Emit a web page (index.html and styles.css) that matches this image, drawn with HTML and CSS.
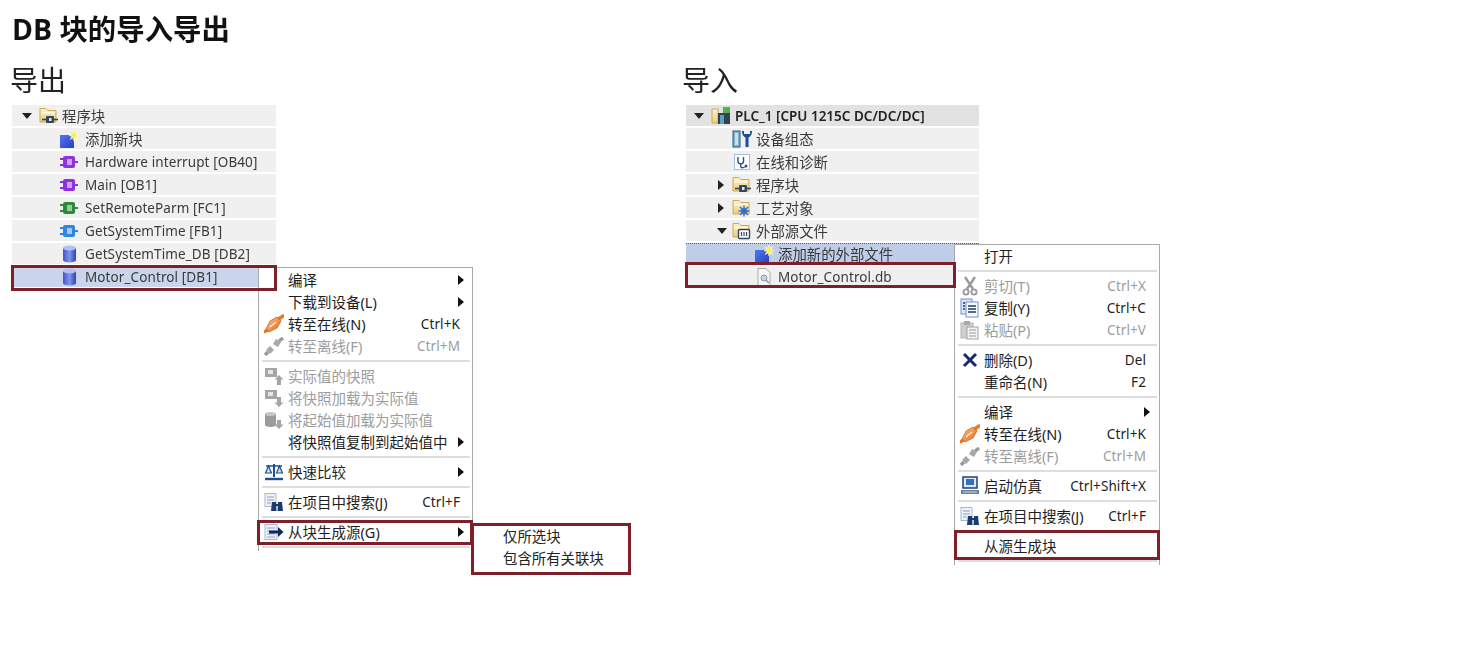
FILE: index.html
```html
<!DOCTYPE html>
<html lang="zh-CN">
<head>
<meta charset="utf-8">
<title>DB 块的导入导出</title>
<link rel="stylesheet" href="styles.css">
</head>
<body>
<svg class="sprite" aria-hidden="true">
  <defs>
    <linearGradient id="g-folder" x1="0" y1="0" x2="0" y2="1"><stop offset="0" stop-color="#fdf1cd"/><stop offset="1" stop-color="#eccb7e"/></linearGradient>
    <linearGradient id="g-db" x1="0" y1="0" x2="1" y2="0"><stop offset="0" stop-color="#3f57c9"/><stop offset=".5" stop-color="#7f93ea"/><stop offset="1" stop-color="#3044ad"/></linearGradient>
    <linearGradient id="g-plug" x1="0" y1="0" x2="1" y2="1"><stop offset="0" stop-color="#fbc38a"/><stop offset="1" stop-color="#e4691a"/></linearGradient>
    <linearGradient id="g-new" x1="0" y1="0" x2="1" y2="1"><stop offset="0" stop-color="#4f78ee"/><stop offset="1" stop-color="#2a3fc8"/></linearGradient>
    <symbol id="i-folder" viewBox="0 0 20 18"><path d="M1 1.500h6l2 2h8v11.500H1z" fill="url(#g-folder)" stroke="#cfa954"/><path d="M2.500 5h13v1.500h-13z" fill="#fffbe9"/></symbol>
    <symbol id="i-star" viewBox="0 0 20 18"><path d="M1 5h14v13H1z" fill="url(#g-new)"/><path d="M15 0l1 3 2.800-1.500L17.300 4.500 20 5.500l-2.700 1 1.500 3L16 8l-1 3-1-3-2.800 1.500 1.500-3-2.700-1 2.700-1-1.500-3L14 3z" fill="#f6ef60" stroke="#fffde0" stroke-width=".5"/></symbol>
    <symbol id="i-block" viewBox="0 0 20 18"><path d="M1 6h4M1 12h4M15 9h4" stroke="currentColor" stroke-width="2"/><rect x="4" y="3" width="12" height="12" rx="2" fill="currentColor"/><rect x="8" y="6" width="5" height="6" fill="#fff" fill-opacity=".55"/></symbol>
    <symbol id="i-db" viewBox="0 0 20 18"><path d="M4 3v12c0 3.200 13 3.200 13 0V3z" fill="url(#g-db)"/><ellipse cx="10.500" cy="3" rx="6.500" ry="2.400" fill="#b4c0f4"/></symbol>
    <symbol id="i-plc" viewBox="0 0 20 18"><path d="M1 2h6v14H1z" fill="url(#g-folder)" stroke="#cfa954"/><rect x="7" y="6" width="12" height="11" fill="#2f4350"/><rect x="9" y="8" width="4" height="9" fill="#5aa0bf"/><rect x="12" y="0" width="7" height="6" fill="#4fb34a"/></symbol>
    <symbol id="i-devcfg" viewBox="0 0 20 18"><rect x="1" y="1" width="7" height="16" fill="#7fb4cc" stroke="#2a5b86"/><rect x="3" y="3" width="3" height="12" fill="#c7e0ec"/><path d="M10 1c0 4 2 6 3.500 6.500V17h3V7.500C18 7 20 5 20 1l-2 0v3h-6V1z" fill="#1d4f8f"/></symbol>
    <symbol id="i-diag" viewBox="0 0 20 18"><rect x="2.500" y="1.500" width="15" height="15" fill="#fff" stroke="#a9bed4"/><path d="M6 4v4.500c0 3 5.500 3 5.500 0V4M8.700 11v2.500c0 1.500 2.500 1.500 4 .5" fill="none" stroke="#27508c" stroke-width="1.400"/><circle cx="14" cy="13" r="1.500" fill="#27508c"/></symbol>
    <symbol id="i-fold-block" viewBox="0 0 20 18"><use href="#i-folder" width="20" height="18"/><path d="M3 12.500h16" stroke="#33475b" stroke-width="1.600"/><rect x="7" y="9" width="8" height="7" rx="1" fill="#33475b"/><rect x="10" y="11" width="2.500" height="3" fill="#dfe6ee"/></symbol>
    <symbol id="i-fold-tech" viewBox="0 0 20 18"><use href="#i-folder" width="20" height="18"/><circle cx="12" cy="12" r="3" fill="#2f6fd0"/><path d="M12 6.500v11M6.500 12h11M8 8l8 8M16 8l-8 8" stroke="#2f6fd0" stroke-width="1.400"/></symbol>
    <symbol id="i-fold-src" viewBox="0 0 20 18"><use href="#i-folder" width="20" height="18"/><rect x="6.500" y="7.500" width="11" height="9" rx="1" fill="#fff" stroke="#33475b" stroke-width="1.400"/><path d="M9.500 10v4M12 10v4M14.500 10v4" stroke="#33475b" stroke-width="1.200"/></symbol>
    <symbol id="i-file" viewBox="0 0 20 18"><path d="M4 .5h8l4 4V17.500H4z" fill="#f7f7f7" stroke="#a9a9a9"/><circle cx="10" cy="10" r="3" fill="#c9d2dc" stroke="#8d98a6"/><path d="M12 12l3 3" stroke="#8d98a6" stroke-width="1.500"/></symbol>
    <symbol id="i-plug" viewBox="0 0 20 20"><path d="M1 17.500l5-3M14 5.500l5-3.500" stroke="#e87a25" stroke-width="3.400" stroke-linecap="round"/><path d="M2 15l4-8 7-4 4 4-4 7-8 4z" fill="url(#g-plug)" stroke="#c9590f" stroke-width=".7"/><path d="M6 13l6-5" stroke="#fff0df" stroke-width="1.400"/></symbol>
    <symbol id="i-unplug" viewBox="0 0 20 20"><path d="M1 19l3-3M15 5l4-3" stroke="#9a9a9a" stroke-width="3.400"/><path d="M2 14l4-4 4 4-4 4zM9 8l3-5 5 3-3 5z" fill="#a9a9a9"/></symbol>
    <symbol id="i-snap-up" viewBox="0 0 20 20"><rect x="1" y="2" width="12" height="9" fill="#a5a5a5"/><rect x="4" y="4" width="5" height="4" fill="#e4e4e4"/><path d="M15 9l4.500 4.500H17V19h-4v-5.500h-2.500z" fill="#a5a5a5"/></symbol>
    <symbol id="i-snap-down" viewBox="0 0 20 20"><rect x="1" y="2" width="12" height="9" fill="#a5a5a5"/><rect x="4" y="4" width="5" height="4" fill="#e4e4e4"/><path d="M15 19l4.500-4.500H17V9h-4v5.500h-2.500z" fill="#a5a5a5"/></symbol>
    <symbol id="i-db-down" viewBox="0 0 20 20"><path d="M1 4v11c0 2.500 11 2.500 11 0V4z" fill="#9b9b9b"/><ellipse cx="6.500" cy="4" rx="5.500" ry="2" fill="#c6c6c6"/><path d="M15 19l4.500-4.500H17V10h-4v4.500h-2.500z" fill="#a5a5a5"/></symbol>
    <symbol id="i-scale" viewBox="0 0 20 20"><path d="M10 2v13" stroke="#1d4f8f" stroke-width="2"/><path d="M2 4h16" stroke="#1d4f8f" stroke-width="1.500"/><path d="M1 17h18" stroke="#1d4f8f" stroke-width="2.400"/><path d="M4.500 4L1.500 11h6zM15.500 4l-3 7h6z" fill="#cfe0f2" stroke="#1d4f8f" stroke-width="1.200"/></symbol>
    <symbol id="i-search" viewBox="0 0 20 20"><rect x="1" y="1.500" width="11" height="13" fill="#eef2f8" stroke="#a9b9cc"/><path d="M3 5h7M3 8h7M3 11h4" stroke="#8ea2bb"/><path d="M8 10h4l.5 9H7zM14 10h4l1 9h-5.500z" fill="#1c3a6c"/><path d="M11 13h4" stroke="#1c3a6c" stroke-width="2"/></symbol>
    <symbol id="i-gensrc" viewBox="0 0 20 20"><rect x="1" y="2.500" width="12" height="15" fill="#eef2f8" stroke="#a9b9cc"/><path d="M3 6h8M3 9h8M3 12h8M3 15h8" stroke="#8ea2bb"/><path d="M5 8.500h9V5l5.500 5-5.500 5v-3.500H5z" fill="#14265c"/></symbol>
    <symbol id="i-cut" viewBox="0 0 20 20"><path d="M5 1l8 12M15 1L7 13" stroke="#999" stroke-width="2.400"/><circle cx="6" cy="16" r="2.600" fill="none" stroke="#999" stroke-width="1.800"/><circle cx="14" cy="16" r="2.600" fill="none" stroke="#999" stroke-width="1.800"/></symbol>
    <symbol id="i-copy" viewBox="0 0 20 20"><rect x="1" y="1" width="11" height="15" fill="#dfe7f5" stroke="#6f90d0"/><rect x="6" y="4" width="12" height="15" fill="#f7f9fd" stroke="#6f90d0"/><path d="M8 8h8M8 11h8M8 14h8" stroke="#1e3a6e" stroke-width="1.300"/><path d="M3 5h2M3 8h2M3 11h2" stroke="#1e3a6e" stroke-width="1.300"/></symbol>
    <symbol id="i-paste" viewBox="0 0 20 20"><rect x="1" y="3" width="12" height="15" fill="#cfcfcf" stroke="#b5b5b5"/><rect x="4" y="1" width="6" height="4" fill="#a9a9a9"/><rect x="7" y="7" width="11" height="12" fill="#f4f4f4" stroke="#a3a3a3"/><path d="M9 10h7M9 13h7M9 16h7" stroke="#9a9a9a"/></symbol>
    <symbol id="i-del" viewBox="0 0 20 20"><path d="M4 4l12 12M16 4L4 16" stroke="#1b2a6b" stroke-width="3"/></symbol>
    <symbol id="i-sim" viewBox="0 0 20 20"><rect x="3" y="1" width="14" height="11" fill="#dfe7f5" stroke="#1d3f7a" stroke-width="1.500"/><rect x="6" y="3" width="8" height="6" fill="#2f6fc0"/><rect x="1" y="14" width="18" height="4" fill="#6a7f99"/><path d="M3 16h14" stroke="#d5dde8"/></symbol>
  </defs>
</svg>

<main class="page">
  <h1 class="title">DB 块的导入导出</h1>
  <div class="columns">

    <section class="col col-export">
      <h2 class="heading">导出</h2>
      <div class="tree tree-export">
        <div class="row export-root"><span class="twist open"></span><svg class="ico"><use href="#i-fold-block"/></svg><span class="label cjk">程序块</span></div>
        <div class="row export-leaf"><svg class="ico"><use href="#i-star"/></svg><span class="label cjk">添加新块</span></div>
        <div class="row export-leaf"><svg class="ico ob"><use href="#i-block"/></svg><span class="label">Hardware interrupt [OB40]</span></div>
        <div class="row export-leaf"><svg class="ico ob"><use href="#i-block"/></svg><span class="label">Main [OB1]</span></div>
        <div class="row export-leaf"><svg class="ico fc"><use href="#i-block"/></svg><span class="label">SetRemoteParm [FC1]</span></div>
        <div class="row export-leaf"><svg class="ico fb"><use href="#i-block"/></svg><span class="label">GetSystemTime [FB1]</span></div>
        <div class="row export-leaf"><svg class="ico"><use href="#i-db"/></svg><span class="label">GetSystemTime_DB [DB2]</span></div>
        <div class="row export-leaf selected"><svg class="ico"><use href="#i-db"/></svg><span class="label">Motor_Control [DB1]</span></div>
      </div>
      <div class="redbox export-row-box"></div>

      <div class="menu menu-export">
        <div class="item"><span class="mi"></span><span class="text">编译</span><span class="arrow"></span></div>
        <div class="item"><span class="mi"></span><span class="text">下载到设备(L)</span><span class="arrow"></span></div>
        <div class="item"><svg class="mi"><use href="#i-plug"/></svg><span class="text">转至在线(N)</span><span class="key">Ctrl+K</span></div>
        <div class="item off"><svg class="mi"><use href="#i-unplug"/></svg><span class="text">转至离线(F)</span><span class="key">Ctrl+M</span></div>
        <div class="sep"></div>
        <div class="item off"><svg class="mi"><use href="#i-snap-up"/></svg><span class="text">实际值的快照</span></div>
        <div class="item off"><svg class="mi"><use href="#i-snap-down"/></svg><span class="text">将快照加载为实际值</span></div>
        <div class="item off"><svg class="mi"><use href="#i-db-down"/></svg><span class="text">将起始值加载为实际值</span></div>
        <div class="item"><span class="mi"></span><span class="text">将快照值复制到起始值中</span><span class="arrow"></span></div>
        <div class="sep"></div>
        <div class="item"><svg class="mi"><use href="#i-scale"/></svg><span class="text">快速比较</span><span class="arrow"></span></div>
        <div class="sep"></div>
        <div class="item"><svg class="mi"><use href="#i-search"/></svg><span class="text">在项目中搜索(J)</span><span class="key">Ctrl+F</span></div>
        <div class="sep"></div>
        <div class="item"><svg class="mi"><use href="#i-gensrc"/></svg><span class="text">从块生成源(G)</span><span class="arrow"></span></div>
        <div class="sep"></div>
      </div>
      <div class="redbox export-item-box"></div>
      <div class="submenu redbox">
        <div class="sub-item">仅所选块</div>
        <div class="sub-item">包含所有关联块</div>
      </div>
    </section>

    <section class="col col-import">
      <h2 class="heading">导入</h2>
      <div class="tree tree-import">
        <div class="row import-root plc"><span class="twist open"></span><svg class="ico"><use href="#i-plc"/></svg><span class="label">PLC_1 [CPU 1215C DC/DC/DC]</span></div>
        <div class="row import-leaf"><svg class="ico"><use href="#i-devcfg"/></svg><span class="label cjk">设备组态</span></div>
        <div class="row import-leaf"><svg class="ico"><use href="#i-diag"/></svg><span class="label cjk">在线和诊断</span></div>
        <div class="row import-branch"><span class="twist closed"></span><svg class="ico"><use href="#i-fold-block"/></svg><span class="label cjk">程序块</span></div>
        <div class="row import-branch"><span class="twist closed"></span><svg class="ico"><use href="#i-fold-tech"/></svg><span class="label cjk">工艺对象</span></div>
        <div class="row import-branch"><span class="twist open"></span><svg class="ico"><use href="#i-fold-src"/></svg><span class="label cjk">外部源文件</span></div>
        <div class="row import-deep focused"><svg class="ico"><use href="#i-star"/></svg><span class="label cjk">添加新的外部文件</span></div>
        <div class="row import-deep"><svg class="ico"><use href="#i-file"/></svg><span class="label">Motor_Control.db</span></div>
      </div>
      <div class="redbox import-row-box"></div>

      <div class="menu menu-import">
        <div class="item"><span class="mi"></span><span class="text">打开</span></div>
        <div class="sep"></div>
        <div class="item off"><svg class="mi"><use href="#i-cut"/></svg><span class="text">剪切(T)</span><span class="key">Ctrl+X</span></div>
        <div class="item"><svg class="mi"><use href="#i-copy"/></svg><span class="text">复制(Y)</span><span class="key">Ctrl+C</span></div>
        <div class="item off"><svg class="mi"><use href="#i-paste"/></svg><span class="text">粘贴(P)</span><span class="key">Ctrl+V</span></div>
        <div class="sep"></div>
        <div class="item"><svg class="mi"><use href="#i-del"/></svg><span class="text">删除(D)</span><span class="key">Del</span></div>
        <div class="item"><span class="mi"></span><span class="text">重命名(N)</span><span class="key">F2</span></div>
        <div class="sep"></div>
        <div class="item"><span class="mi"></span><span class="text">编译</span><span class="arrow"></span></div>
        <div class="item"><svg class="mi"><use href="#i-plug"/></svg><span class="text">转至在线(N)</span><span class="key">Ctrl+K</span></div>
        <div class="item off"><svg class="mi"><use href="#i-unplug"/></svg><span class="text">转至离线(F)</span><span class="key">Ctrl+M</span></div>
        <div class="sep"></div>
        <div class="item"><svg class="mi"><use href="#i-sim"/></svg><span class="text">启动仿真</span><span class="key">Ctrl+Shift+X</span></div>
        <div class="sep"></div>
        <div class="item"><svg class="mi"><use href="#i-search"/></svg><span class="text">在项目中搜索(J)</span><span class="key">Ctrl+F</span></div>
        <div class="item spaced"><span class="mi"></span><span class="text">从源生成块</span></div>
        <div class="sep"></div>
      </div>
      <div class="redbox import-item-box"></div>
    </section>
  </div>
</main>
</body>
</html>
```

FILE: styles.css
```css
* { box-sizing: border-box; }

html, body {
  margin: 0;
  background: #fff;
}

body {
  font-family: "Noto Sans", "Noto Sans CJK SC", sans-serif;
  color: #1e1e1e;
  overflow: hidden;
}

.sprite {
  position: absolute;
  width: 0;
  height: 0;
}

.page {
  width: 1476px;
  height: 656px;
  padding: 9px 0 0 12px;
  filter: blur(0.35px);
}

.title {
  margin: 0;
  font-size: 28.4px;
  line-height: 40px;
  font-weight: 700;
  font-family: "Open Sans", "Noto Sans CJK SC", sans-serif;
  color: #111;
}

.columns {
  display: flex;
  margin-top: 10px;
}

.col {
  position: relative;
}

.col-export { width: 674px; }
.col-import { width: 400px; }

.heading {
  margin: 0 0 0 -2px;
  font-size: 28px;
  line-height: 40px;
  font-weight: 400;
  font-family: "Noto Sans CJK SC", sans-serif;
  color: #222;
}

.col-import .heading { margin-left: -4px; }

/* tree panels */
.tree {
  margin-top: 6px;
  display: flex;
  flex-direction: column;
  gap: 2px;
}

.tree-export { width: 264px; }
.tree-import { width: 293px; }

.row {
  height: 21px;
  display: flex;
  align-items: center;
  background: #f0f0f0;
  font-size: 13.5px;
  letter-spacing: 0.1px;
  color: #3a3a3a;
}

.export-root { padding-left: 8px; }
.export-leaf { padding-left: 47px; }
.export-leaf .label { margin-left: 6px; }
.import-root { padding-left: 6px; }
.import-leaf { padding-left: 46px; }
.import-branch { padding-left: 29px; }
.import-deep { padding-left: 68px; }

.plc {
  background: #e2e2e2;
}
.plc .label {
  font-weight: 600;
  font-size: 13.5px;
  letter-spacing: 0;
  color: #222;
}

.selected { background: #c9d5ea; }

.focused {
  background: #bfcde6;
  border-top: 1px dotted #3f5f9f;
  border-bottom: 1px dotted #3f5f9f;
}

.twist {
  flex: none;
  width: 19px;
  position: relative;
}

.import-branch .twist { width: 17px; }

.twist::before {
  content: "";
  position: absolute;
  left: 2px;
  border-style: solid;
  border-color: transparent;
}

.twist.open::before {
  border-width: 6px 5.5px 0;
  border-top-color: #222;
  top: -3px;
}

.twist.closed::before {
  border-width: 5.5px 0 5.5px 6px;
  border-left-color: #222;
  top: -5px;
  left: 3px;
}

.ico {
  flex: none;
  width: 20px;
  height: 18px;
}

.ob { color: #8f32dc; }
.fc { color: #2d8a3a; }
.fb { color: #2f86e0; }

.label {
  margin-left: 4px;
  white-space: nowrap;
}

.export-root .label { margin-left: 3px; }
.label.cjk {
  font-size: 14.4px;
  letter-spacing: 0;
}

/* context menus */
.menu {
  position: absolute;
  background: #fff;
  border: 1px solid #a9a9a9;
  border-bottom: 0;
  font-size: 14.5px;
  line-height: 22px;
  z-index: 1;
}

.menu-export {
  left: 246px;
  top: 208px;
  width: 215px;
  padding-top: 1px;
}

.menu-import {
  left: 268px;
  top: 185px;
  width: 206px;
  padding-top: 0;
}

.item {
  height: 22px;
  display: flex;
  align-items: center;
  padding-left: 5px;
  padding-right: 12px;
  white-space: nowrap;
}

.menu-import .item { padding-right: 13px; }

.item.spaced {
  margin-top: 8px;
}

.mi {
  flex: none;
  width: 20px;
  height: 20px;
  margin-right: 4px;
}

.text { flex: 1; }

.key {
  font-size: 13.5px;
  letter-spacing: 0.1px;
  color: #222;
}

.off,
.off .key { color: #9c9c9c; }

.arrow {
  flex: none;
  width: 0;
  height: 0;
  margin-right: -4px;
  border-style: solid;
  border-width: 5.5px 0 5.5px 6px;
  border-color: transparent transparent transparent #111;
}

.sep {
  height: 2px;
  margin: 3px 2px 3px 3px;
  background: #dddddd;
}

/* highlight rectangles */
.redbox {
  position: absolute;
  border: 3px solid #7e2029;
  z-index: 2;
}

.export-row-box { left: -1px; top: 206px; width: 266px; height: 26px; }
.export-item-box { left: 245px; top: 461px; width: 216px; height: 25px; }

.submenu {
  left: 459px;
  top: 464px;
  width: 160px;
  height: 52px;
  background: #fff;
  padding: 0 0 0 29px;
  font-size: 14.4px;
  color: #222;
}

.sub-item {
  line-height: 22px;
  white-space: nowrap;
}

.import-row-box { left: -1px; top: 203px; width: 271px; height: 26px; }
.import-item-box { left: 268px; top: 471px; width: 206px; height: 30px; }
```
